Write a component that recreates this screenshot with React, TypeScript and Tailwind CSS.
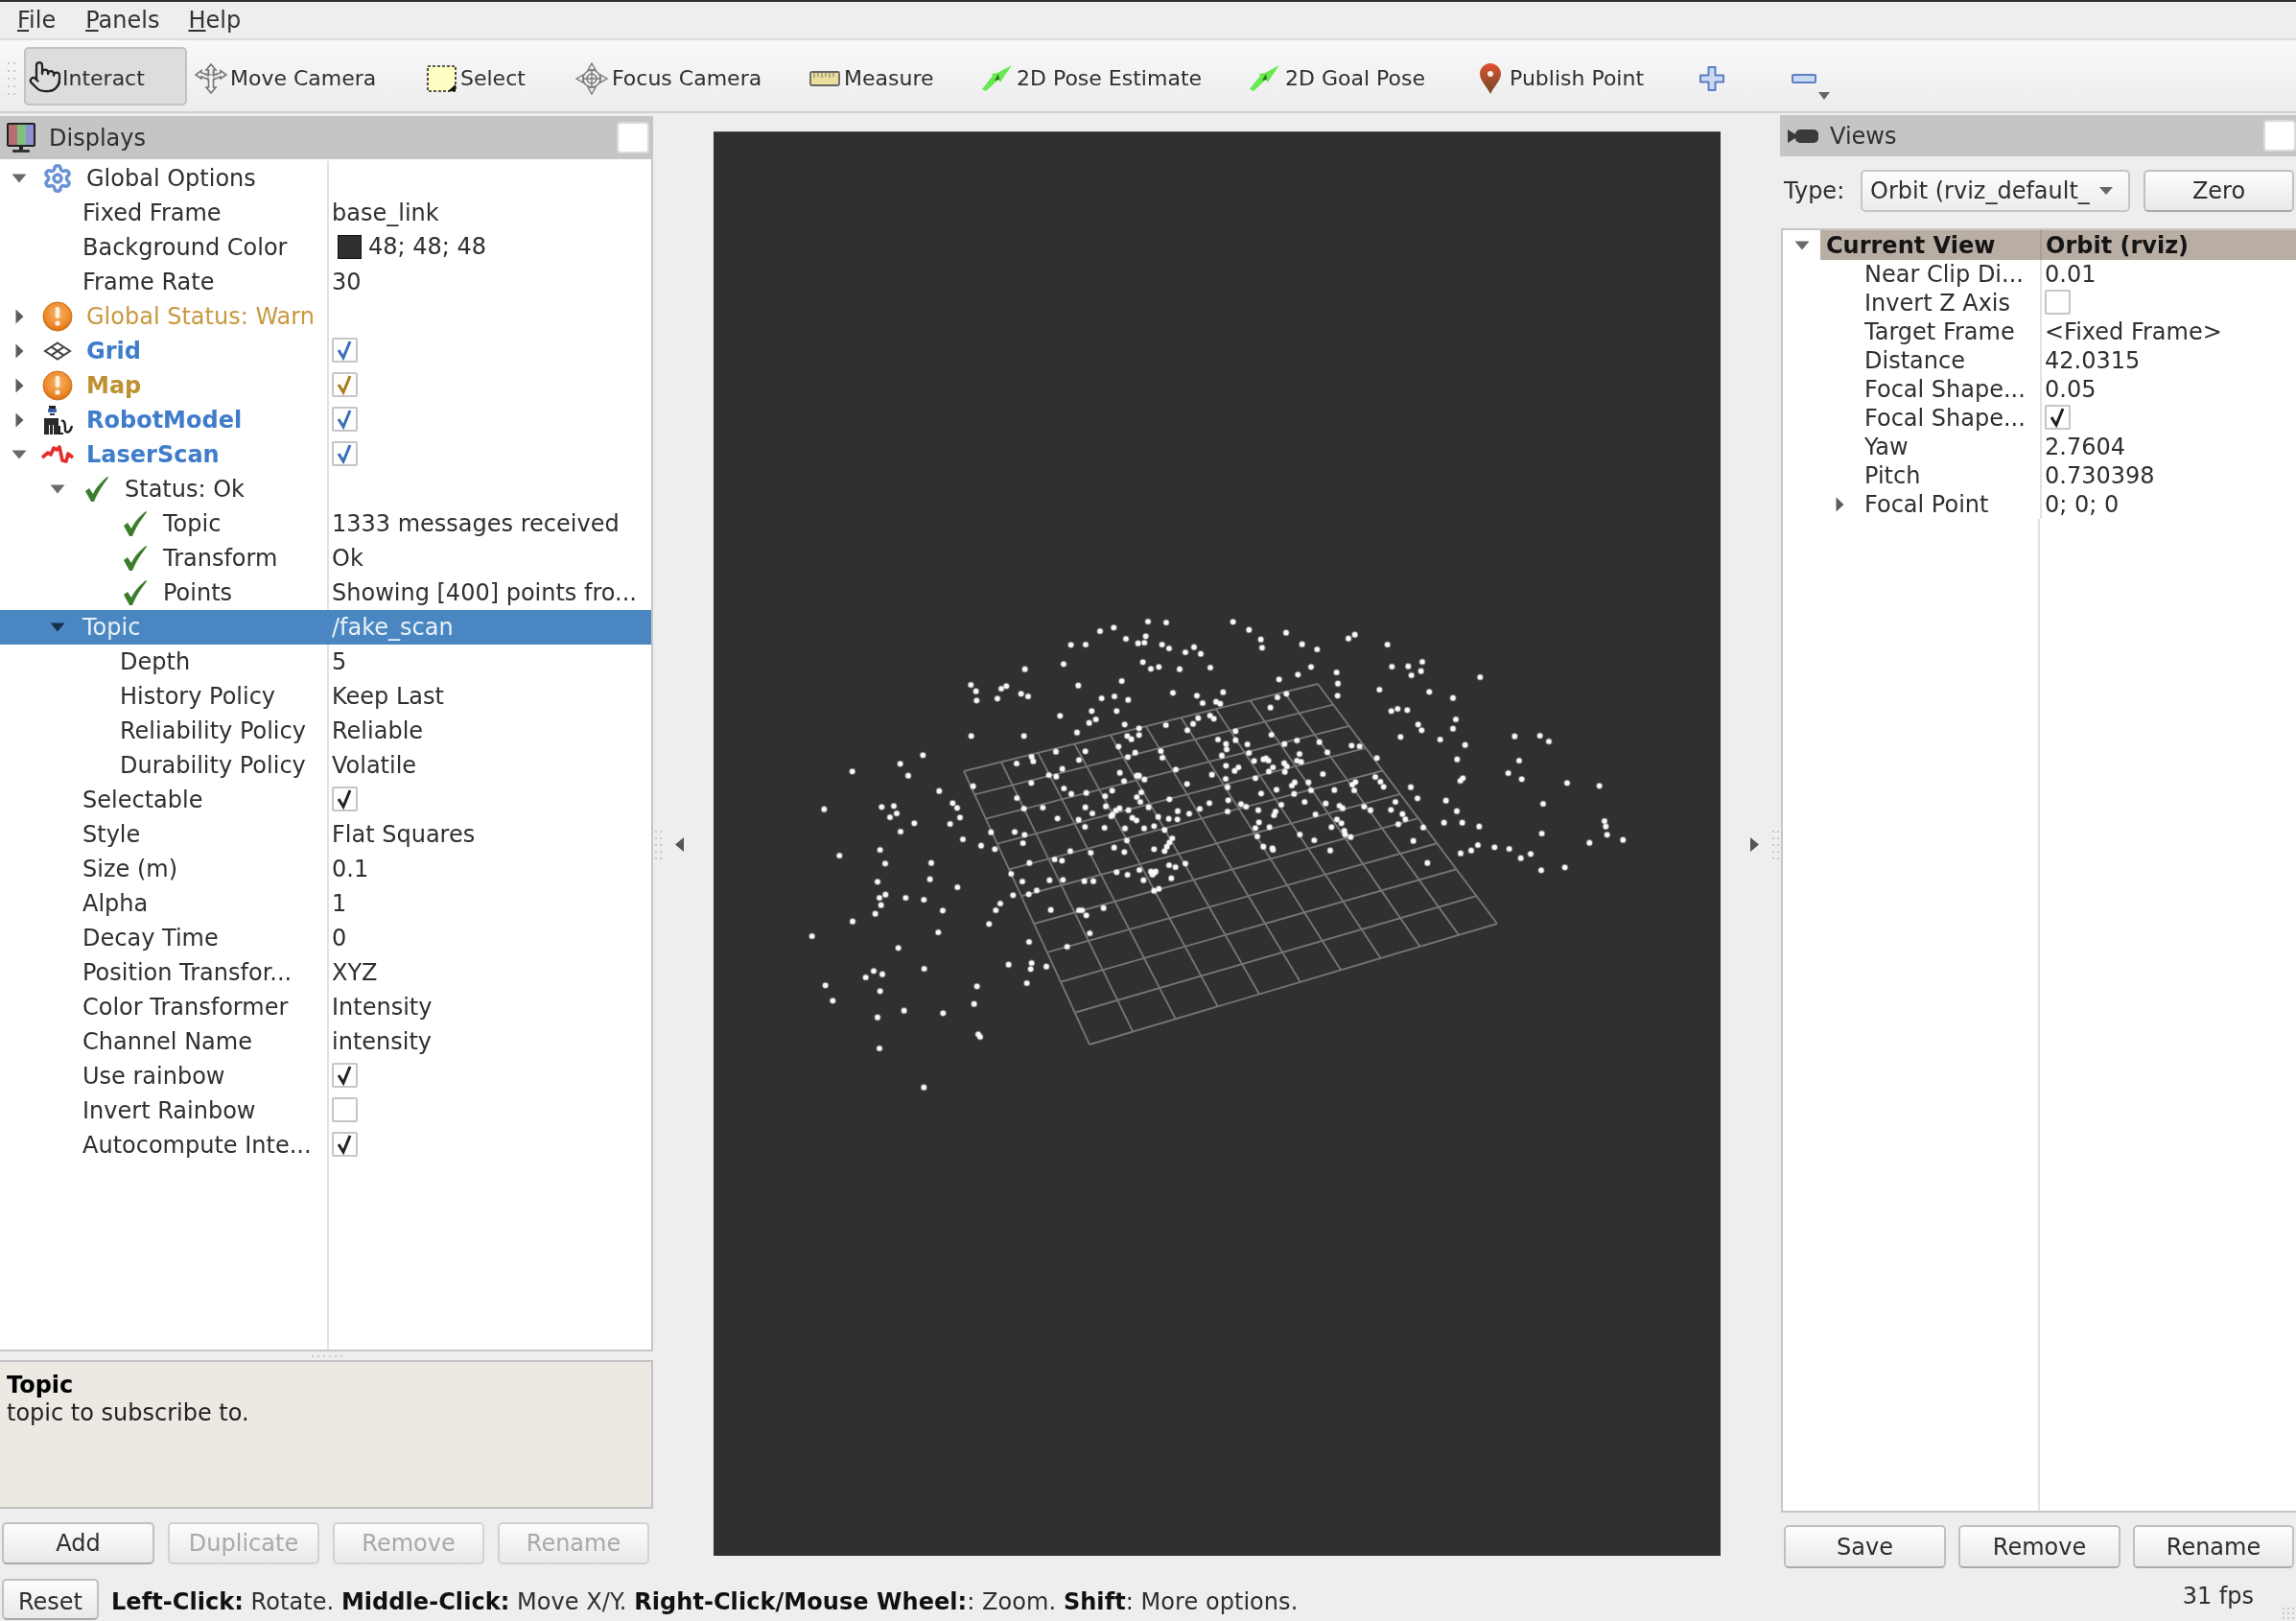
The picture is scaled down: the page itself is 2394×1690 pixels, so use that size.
import React from "react";
import { Pointer, Settings } from "lucide-react";

const ptsA: number[][] = [[1131,84],[1188,87],[1397,85],[1447,110],[981,114],[1024,103],[1062,138],[1124,130],[1120,150],[1100,152],[1175,156],[1197,168],[1275,164],[1248,180],[1296,185],[1484,140],[1488,166],[890,157],[936,156],[867,217],[746,233],[1115,211],[1140,232],[1165,226],[1230,233],[1326,228],[577,282],[593,302],[595,331],[672,294],[688,286],[660,325],[734,310],[756,318],[913,284],[1049,270],[1209,307],[1284,316],[1366,305],[1302,339],[1344,335],[1357,341],[986,324],[1026,318],[1069,329],[955,364],[1033,364],[856,379],[947,401],[968,390],[1058,406],[1325,378],[1337,388],[1288,386],[1272,404],[1187,408],[1103,418],[1254,424],[1405,427],[578,442],[743,442],[909,431],[1066,442],[1079,452],[1103,439],[1350,453],[1375,467],[1377,484],[1405,455],[1442,468],[1447,495],[427,502],[767,507],[772,521],[843,491],[935,490],[1039,475],[1091,494],[1068,508],[1171,489],[1176,510],[1362,503],[1463,520],[1492,515],[356,529],[206,553],[381,566],[720,528],[863,545],[915,517],[821,564],[844,569],[1043,557],[1096,566],[1103,566],[1120,578],[1218,547],[1331,563],[1375,535],[1414,540],[1402,551],[1374,576],[1467,574],[478,614],[584,599],[766,589],[868,606],[891,623],[938,620],[1056,583],[1019,613],[997,630],[1110,618],[1253,592],[1380,602],[1485,622],[118,671],[298,664],[336,661],[345,684],[324,696],[520,652],[534,667],[543,697],[721,636],[743,669],[802,666],[935,665],[957,684],[999,662],[1096,633],[1107,648],[1133,665],[1198,640],[1293,670],[1323,652],[1382,643],[1422,655],[1438,663],[1476,674],[1380,678],[1020,688],[1030,675],[1042,668],[1070,674],[1016,693],[1082,698],[1095,706],[1163,695],[1196,701],[1224,677],[1223,703],[1260,685],[1478,712],[400,715],[512,717],[357,741],[640,743],[714,742],[745,751],[848,700],[914,704],[934,726],[995,729],[1059,731],[1119,731],[1150,724],[1183,736],[1467,730],[1473,756],[552,765],[609,785],[652,796],[740,777],[1065,769],[1207,762],[1198,775],[1190,788],[1183,802],[1492,788],[293,798],[166,816],[888,802],[952,807],[1025,791],[1057,805],[1150,796],[309,841],[453,839],[839,828],[862,832],[760,839],[1197,846],[1217,852],[1248,841],[703,873],[1033,868],[1067,876],[1104,861],[1140,866],[1150,870],[1155,866],[1145,876],[449,890],[285,898],[738,897],[823,893],[865,892],[932,896],[960,896],[1117,893],[1204,887]];
const ptsB: number[][] = [[63,119],[113,155],[160,171],[258,137],[278,125],[380,156],[141,226],[100,250],[41,265],[221,243],[225,278],[224,316],[394,225],[445,224],[489,210],[485,239],[455,252],[670,258],[355,297],[64,310],[36,321],[14,353],[511,304],[585,323],[392,364],[412,357],[442,361],[594,390],[585,419],[476,406],[487,424],[421,445],[545,453],[17,438],[97,456],[58,467],[167,461],[268,472],[293,474],[623,470],[778,443],[857,441],[885,459],[192,493],[105,498],[347,511],[598,515],[792,519],[0,512],[8,519],[57,527],[65,537],[22,540],[9,553],[59,554],[97,519],[110,523],[178,561],[758,558],[342,570],[358,585],[368,601],[280,586],[270,594],[276,612],[133,587],[90,587],[81,597],[800,577],[608,582],[616,574],[942,589],[1043,598],[453,602],[33,610],[141,612],[214,611],[88,623],[474,637],[563,644],[405,648],[121,648],[48,657],[187,653],[230,660],[240,668],[307,663],[327,674],[391,673],[597,677],[867,654],[30,678],[25,690],[155,687],[427,686],[436,702],[222,703],[236,715],[205,727],[11,727],[414,718],[557,713],[614,713],[667,725],[492,728],[1059,708],[1063,725],[1067,751],[245,738],[248,750],[265,758],[106,750],[151,768],[461,770],[863,747],[1117,767],[1012,776],[20,793],[22,798],[201,800],[663,783],[715,790],[761,795],[642,800],[609,809],[828,811],[797,824],[505,839],[861,862],[935,853]];
const ptsC: number[][] = [[535,15],[310,38],[291,48],[373,48],[430,54],[296,71],[278,98],[489,88],[207,122],[80,168],[475,156],[350,205],[709,40],[758,37],[783,25],[669,66],[655,87],[634,130],[827,86],[915,87],[925,87],[938,103],[992,80],[1150,26],[1165,20],[949,159],[759,186],[878,201],[695,257],[767,252],[764,271],[813,263],[752,315],[431,270],[273,277],[248,297],[300,287],[122,322],[293,340],[145,370],[596,325],[587,380],[368,401],[490,409],[285,422],[600,475],[606,483],[291,519],[430,641]];
const points: number[][] = [
  ...ptsA.map(([x, y]) => [820 + x / 3, 620 + y / 3]),
  ...ptsB.map(([x, y]) => [1320 + x / 3, 620 + y / 3]),
  ...ptsC.map(([x, y]) => [820 + x / 3, 920 + y / 3]),
];

function makeProjector() {
  const [x0, y0, x1, y1, x2, y2, x3, y3] = [1005, 804, 1374, 713, 1561, 963, 1136, 1089];
  const dx1 = x1 - x2, dx2 = x3 - x2, sx = x0 - x1 + x2 - x3;
  const dy1 = y1 - y2, dy2 = y3 - y2, sy = y0 - y1 + y2 - y3;
  const den = dx1 * dy2 - dx2 * dy1;
  const g = (sx * dy2 - dx2 * sy) / den, h = (dx1 * sy - sx * dy1) / den;
  const a = x1 - x0 + g * x1, b = x3 - x0 + h * x3, d = y1 - y0 + g * y1, e = y3 - y0 + h * y3;
  return (u: number, v: number) => {
    const w = g * u + h * v + 1;
    return [(a * u + b * v + x0) / w, (d * u + e * v + y0) / w];
  };
}
const project = makeProjector();
const gridLines: number[][][] = [];
for (let i = 0; i <= 10; i++) {
  gridLines.push([project(i / 10, 0), project(i / 10, 1)]);
  gridLines.push([project(0, i / 10), project(1, i / 10)]);
}

function ArrowDown({ dark }: { dark?: boolean }) {
  return (
    <svg width="16" height="10" viewBox="0 0 16 10">
      <path d="M0.5 0.5 H15.5 L8 9.5 Z" fill={dark ? "#16304f" : "#6a6a6a"} />
    </svg>
  );
}
function ArrowRight() {
  return (
    <svg width="9" height="16" viewBox="0 0 9 16">
      <path d="M0.5 0.5 V15.5 L8.5 8 Z" fill="#5c5c5c" />
    </svg>
  );
}
function WarnIcon() {
  return (
    <svg width="32" height="32" viewBox="0 0 32 32">
      <defs>
        <radialGradient id="warnGrad" cx="50%" cy="40%" r="60%">
          <stop offset="0%" stopColor="#f7b56a" />
          <stop offset="70%" stopColor="#ee8a2c" />
          <stop offset="100%" stopColor="#d96f14" />
        </radialGradient>
      </defs>
      <circle cx="16" cy="16" r="15" fill="url(#warnGrad)" stroke="#c9701c" strokeWidth="1" />
      <rect x="13.6" y="6" width="4.8" height="12" rx="2.2" fill="#fdf1e2" />
      <circle cx="16" cy="23" r="2.6" fill="#fdf1e2" />
    </svg>
  );
}
function GridIcon() {
  return (
    <svg width="30" height="20" viewBox="0 0 30 20" fill="none" stroke="#444" strokeWidth="2">
      <path d="M15 1.5 L28 10 L15 18.5 L2 10 Z" />
      <path d="M8.5 5.7 L21.5 14.3 M21.5 5.7 L8.5 14.3" />
    </svg>
  );
}
function RobotIcon() {
  return (
    <svg width="32" height="30" viewBox="0 0 32 30">
      <rect x="7" y="0" width="7" height="3" fill="#222" />
      <rect x="6" y="3" width="9" height="4" rx="1" fill="#3a5fb0" />
      <rect x="8" y="8" width="5" height="2" fill="#333" />
      <path d="M2 13 H17 V30 H12 V20 H11 V30 H8 V20 H7 V30 H2 Z" fill="#2a2a2a" />
      <path d="M20 16 C24 14 24 22 24 25 C24 29 29 29 31 21" fill="none" stroke="#222" strokeWidth="2.4" />
      <path d="M18 21 L18 29 L22 29" fill="none" stroke="#222" strokeWidth="2" />
    </svg>
  );
}
function LaserIcon() {
  return (
    <svg width="34" height="20" viewBox="0 0 34 20" fill="none" stroke="#e52d2d" strokeWidth="3.6" strokeLinejoin="round">
      <path d="M1 13 L7 8 L10 10 L13 3 L16 5 L19 2 L22 16 L26 17 L28 9 L33 13" />
    </svg>
  );
}
function GreenCheck() {
  return (
    <svg width="26" height="26" viewBox="0 0 26 26">
      <path d="M1 15 L5 12 L9 18 C12 11 18 5 24 0 L25 1 C19 9 14 16 10 26 L7 26 Z" fill="#3c7d2c" />
    </svg>
  );
}
function Check({ color }: { color: string }) {
  return (
    <svg width="27" height="26" viewBox="0 0 27 26" fill="none" stroke={color} strokeWidth="3">
      <path d="M7 13 L12 21 L19 4" />
    </svg>
  );
}
function CheckBox({ color }: { color?: string }) {
  return (
    <div className="w-[27px] h-[26px] -mt-[2px] border-2 border-[#c6c6c6] bg-white rounded-[2px] flex items-center justify-center">
      {color ? <div className="-m-[2px]"><Check color={color} /></div> : null}
    </div>
  );
}

type RowDef = {
  pl?: string;
  arrow?: "down" | "right";
  icon?: React.ReactNode;
  iconSlot?: string;
  label: string;
  labelCls?: string;
  value?: React.ReactNode;
  selected?: boolean;
};

const iconSlot0 = "w-[40px] mr-[10px] justify-center";
const iconSlot1 = "w-[42px] mr-[8px] justify-center";
const iconSlot2 = "w-[42px] justify-start";
const blue = "font-bold text-[#3f7cc9]";
const amber = "font-bold text-[#bf9030]";

const leftRows: RowDef[] = [
  { arrow: "down", icon: <Settings size={32} color="#6a93d6" strokeWidth={2.6} />, iconSlot: iconSlot0, label: "Global Options" },
  { pl: "pl-[86px]", label: "Fixed Frame", value: "base_link" },
  { pl: "pl-[86px]", label: "Background Color", value: <span className="flex items-center -mt-[2px]"><span className="w-[25px] h-[25px] bg-[#303030] border border-[#111] ml-[6px] mr-[7px]" />48; 48; 48</span> },
  { pl: "pl-[86px]", label: "Frame Rate", value: "30" },
  { arrow: "right", icon: <WarnIcon />, iconSlot: iconSlot0, label: "Global Status: Warn", labelCls: "text-[#c9983e]" },
  { arrow: "right", icon: <GridIcon />, iconSlot: iconSlot0, label: "Grid", labelCls: blue, value: <CheckBox color="#3a6fb8" /> },
  { arrow: "right", icon: <WarnIcon />, iconSlot: iconSlot0, label: "Map", labelCls: amber, value: <CheckBox color="#a87c1c" /> },
  { arrow: "right", icon: <RobotIcon />, iconSlot: iconSlot0, label: "RobotModel", labelCls: blue, value: <CheckBox color="#3a6fb8" /> },
  { arrow: "down", icon: <LaserIcon />, iconSlot: iconSlot0, label: "LaserScan", labelCls: blue, value: <CheckBox color="#3a6fb8" /> },
  { pl: "pl-[40px]", arrow: "down", icon: <GreenCheck />, iconSlot: iconSlot1, label: "Status: Ok" },
  { pl: "pl-[128px]", icon: <GreenCheck />, iconSlot: iconSlot2, label: "Topic", value: "1333 messages received" },
  { pl: "pl-[128px]", icon: <GreenCheck />, iconSlot: iconSlot2, label: "Transform", value: "Ok" },
  { pl: "pl-[128px]", icon: <GreenCheck />, iconSlot: iconSlot2, label: "Points", value: "Showing [400] points fro..." },
  { pl: "pl-[40px]", arrow: "down", label: "Topic", value: "/fake_scan", selected: true, labelCls: "ml-[6px]" },
  { pl: "pl-[125px]", label: "Depth", value: "5" },
  { pl: "pl-[125px]", label: "History Policy", value: "Keep Last" },
  { pl: "pl-[125px]", label: "Reliability Policy", value: "Reliable" },
  { pl: "pl-[125px]", label: "Durability Policy", value: "Volatile" },
  { pl: "pl-[86px]", label: "Selectable", value: <CheckBox color="#222222" /> },
  { pl: "pl-[86px]", label: "Style", value: "Flat Squares" },
  { pl: "pl-[86px]", label: "Size (m)", value: "0.1" },
  { pl: "pl-[86px]", label: "Alpha", value: "1" },
  { pl: "pl-[86px]", label: "Decay Time", value: "0" },
  { pl: "pl-[86px]", label: "Position Transfor...", value: "XYZ" },
  { pl: "pl-[86px]", label: "Color Transformer", value: "Intensity" },
  { pl: "pl-[86px]", label: "Channel Name", value: "intensity" },
  { pl: "pl-[86px]", label: "Use rainbow", value: <CheckBox color="#222222" /> },
  { pl: "pl-[86px]", label: "Invert Rainbow", value: <CheckBox /> },
  { pl: "pl-[86px]", label: "Autocompute Inte...", value: <CheckBox color="#222222" /> },
];

function LeftRow({ r }: { r: RowDef }) {
  return (
    <div className={`flex h-[36px] shrink-0 items-center whitespace-nowrap ${r.selected ? "bg-[#4a87c2] text-[#eaf1f8]" : ""}`}>
      <div className={`w-[341px] shrink-0 flex items-center h-full overflow-hidden ${r.pl ?? ""}`}>
        {r.arrow ? (
          <span className="w-[40px] flex justify-center shrink-0">
            {r.arrow === "down" ? <ArrowDown dark={r.selected} /> : <ArrowRight />}
          </span>
        ) : null}
        {r.icon ? <span className={`flex shrink-0 ${r.iconSlot ?? ""}`}>{r.icon}</span> : null}
        <span className={r.labelCls ?? ""}>{r.label}</span>
      </div>
      <div className={`flex-1 h-full flex items-center pl-[3px] border-l-2 ${r.selected ? "border-[#4a87c2]" : "border-[#e2e2e2]"}`}>{r.value}</div>
    </div>
  );
}

const viewRows: { label: string; value: React.ReactNode; arrow?: boolean }[] = [
  { label: "Near Clip Di...", value: "0.01" },
  { label: "Invert Z Axis", value: <CheckBox /> },
  { label: "Target Frame", value: "<Fixed Frame>" },
  { label: "Distance", value: "42.0315" },
  { label: "Focal Shape...", value: "0.05" },
  { label: "Focal Shape...", value: <CheckBox color="#222222" /> },
  { label: "Yaw", value: "2.7604" },
  { label: "Pitch", value: "0.730398" },
  { label: "Focal Point", value: "0; 0; 0", arrow: true },
];

function Btn({ children, disabled, cls }: { children: React.ReactNode; disabled?: boolean; cls: string }) {
  return (
    <div className={`flex items-center justify-center rounded-[5px] border-2 bg-gradient-to-b from-[#fdfdfd] to-[#e9e9e9] ${disabled ? "border-[#d2d2d2] text-[#a9a9a9]" : "border-[#c0c0c0] border-b-[#aaaaaa] text-[#2e2e2e]"} ${cls}`}>
      {children}
    </div>
  );
}

function Dots({ cols, rows, cls }: { cols: number; rows: number; cls: string }) {
  const items = Array.from({ length: cols * rows });
  return (
    <div className={`grid ${cls}`}>
      {items.map((_, i) => (
        <span key={i} className="w-[2px] h-[2px] bg-[#c8c8c8]" />
      ))}
    </div>
  );
}

function Tool({ icon, slot, label, cls }: { icon: React.ReactNode; slot: string; label?: string; cls: string }) {
  return (
    <div className={`flex items-center shrink-0 ${cls}`}>
      <span className={`flex items-center shrink-0 ${slot}`}>{icon}</span>
      {label ? <span>{label}</span> : null}
    </div>
  );
}

const MoveIcon = (
  <svg width="34" height="32" viewBox="0 0 34 32" fill="#f4f4f4" stroke="#777" strokeWidth="1.6">
    <path d="M17 1 L22 7 H19.5 V12 L27 10 V7.5 L33 12 L27 16 V14 L19.5 17 V25 H22 L17 31 L12 25 H14.5 V17 L7 14 V16 L1 12 L7 7.5 V10 L14.5 12 V7 H12 Z" />
    <path d="M10 12 L24 12 M14 8 L14 18 M20 8 L20 18" strokeWidth="1" />
  </svg>
);
const SelectIcon = (
  <svg width="31" height="28" viewBox="0 0 31 28">
    <rect x="1" y="1" width="29" height="26" fill="#ffffc4" stroke="#222" strokeWidth="1.6" strokeDasharray="3 2" />
    <path d="M30 20 V27 H22 Z" fill="#111" />
  </svg>
);
const FocusIcon = (
  <svg width="34" height="34" viewBox="0 0 34 34" fill="none" stroke="#7a7a7a" strokeWidth="1.4">
    <path d="M17 1 L21 8 H13 Z M17 33 L21 26 H13 Z M1 17 L8 13 V21 Z M33 17 L26 13 V21 Z" fill="#ececec" />
    <circle cx="17" cy="17" r="9" fill="#eeeeee" />
    <circle cx="17" cy="17" r="5" />
    <path d="M17 8 V26 M8 17 H26" />
  </svg>
);
const MeasureIcon = (
  <svg width="32" height="16" viewBox="0 0 32 16">
    <rect x="1" y="1" width="30" height="14" rx="1.5" fill="#eadf9d" stroke="#666" strokeWidth="1.8" />
    <path d="M5 2 V7 M9 2 V6 M13 2 V7 M17 2 V6 M21 2 V7 M25 2 V6" stroke="#777" strokeWidth="1" />
  </svg>
);
const PoseIcon = (
  <svg width="32" height="27" viewBox="0 0 32 27">
    <path d="M0 25 L11 11 L10 9 L16 8 L31 0 L22 13 L19 18 L17 15 L4 27 Z" fill="#67e84e" />
    <path d="M13 16 L17 9 L18 15 Z" fill="#2f6d22" />
  </svg>
);
const PinIcon = (
  <svg width="22" height="32" viewBox="0 0 22 32">
    <defs>
      <linearGradient id="pinGrad" x1="0" y1="0" x2="0" y2="1">
        <stop offset="0%" stopColor="#e0502f" />
        <stop offset="100%" stopColor="#6e4a2c" />
      </linearGradient>
    </defs>
    <path d="M11 0 C17 0 22 5 22 11 C22 18 14 25 11 32 C8 25 0 18 0 11 C0 5 5 0 11 0 Z" fill="url(#pinGrad)" />
    <circle cx="11" cy="11" r="3" fill="#f6eee6" />
  </svg>
);
const PlusIcon = (
  <svg width="26" height="26" viewBox="0 0 26 26">
    <path d="M9.5 1 H16.5 V9.5 H25 V16.5 H16.5 V25 H9.5 V16.5 H1 V9.5 H9.5 Z" fill="#c9d9f2" stroke="#5b7fc0" strokeWidth="2" strokeLinejoin="round" />
  </svg>
);
const MinusIcon = (
  <svg width="26" height="10" viewBox="0 0 26 10">
    <rect x="1" y="1" width="24" height="8" rx="1" fill="#c9d9f2" stroke="#5b7fc0" strokeWidth="2" />
  </svg>
);

function TitleBar({ icon, title, cls, textCls }: { icon: React.ReactNode; title: string; cls: string; textCls: string }) {
  return (
    <div className={`flex items-center shrink-0 bg-[#c5c5c5] ${cls}`}>
      {icon}
      <span className={textCls}>{title}</span>
      <span className="ml-auto w-[34px] h-[33px] bg-white border-2 border-[#dadada] rounded-[4px]" />
    </div>
  );
}

export default function App() {
  return (
    <div className="w-[2394px] h-[1690px] overflow-hidden flex flex-col bg-[#eeeeee] text-[#2f2f2f] text-[24px] font-['DejaVu_Sans',sans-serif] leading-none blur-[0.6px]">
      <div className="h-[2px] bg-[#303030] shrink-0" />
      <div className="h-[40px] shrink-0 flex items-center bg-[#eeeeee] border-b-2 border-[#dcdcdc] text-[#333]">
        <span className="ml-[18px]"><u>F</u>ile</span>
        <span className="ml-[31px]"><u>P</u>anels</span>
        <span className="ml-[30px]"><u>H</u>elp</span>
      </div>
      <div className="h-[76px] shrink-0 flex items-center pt-[5px] bg-gradient-to-b from-[#f9f9f9] to-[#ececec] border-b-2 border-[#d0d0d0] whitespace-nowrap text-[22px]">
        <Dots cols={2} rows={5} cls="ml-[8px] mr-[9px] grid-cols-2 gap-x-[4px] gap-y-[6px] shrink-0" />
        <div className="w-[170px] h-[61px] shrink-0 mr-[8px] flex items-center pl-[2px] rounded-[5px] bg-[#dddddd] border-2 border-[#c2c2c2] -mt-[4px]">
          <Pointer size={36} color="#222" strokeWidth={1.5} />
          <span className="pt-[4px]">Interact</span>
        </div>
        <Tool cls="w-[242px]" slot="w-[37px]" icon={MoveIcon} label="Move Camera" />
        <Tool cls="w-[155px]" slot="w-[35px]" icon={SelectIcon} label="Select" />
        <Tool cls="w-[244px]" slot="w-[38px]" icon={FocusIcon} label="Focus Camera" />
        <Tool cls="w-[180px]" slot="w-[36px]" icon={MeasureIcon} label="Measure" />
        <Tool cls="w-[279px]" slot="w-[36px]" icon={PoseIcon} label="2D Pose Estimate" />
        <Tool cls="w-[240px]" slot="w-[37px]" icon={PoseIcon} label="2D Goal Pose" />
        <Tool cls="w-[229px]" slot="w-[31px]" icon={PinIcon} label="Publish Point" />
        <Tool cls="w-[96px]" slot="w-[26px]" icon={PlusIcon} />
        <Tool cls="w-[50px]" slot="w-[26px]" icon={MinusIcon} />
        <svg width="12" height="8" viewBox="0 0 12 8" className="self-end mb-[12px] -ml-[22px]">
          <path d="M0 0 H12 L6 8 Z" fill="#666" />
        </svg>
      </div>

      <div className="h-[1522px] shrink-0 flex pt-[3px]">
        {/* Displays column */}
        <div className="w-[681px] shrink-0 flex flex-col">
          <TitleBar
            cls="h-[45px] pl-[6px] pr-[4px]"
            textCls="ml-[13px]"
            title="Displays"
            icon={
              <svg width="32" height="32" viewBox="0 0 32 32">
                <rect x="1" y="0" width="30" height="25" rx="2" fill="#222" />
                <rect x="3" y="2" width="9" height="21" fill="#b56f6f" />
                <rect x="12" y="2" width="9" height="21" fill="#80c180" />
                <rect x="21" y="2" width="8" height="21" fill="#8f8fd4" />
                <rect x="14" y="25" width="4" height="3" fill="#222" />
                <rect x="7" y="28" width="18" height="3" rx="1" fill="#333" />
              </svg>
            }
          />
          <div className="h-[1243px] pt-[2px] bg-white border-r-2 border-b-2 border-[#c6c6c6] flex flex-col shrink-0">
            {leftRows.map((r, i) => (
              <LeftRow key={i} r={r} />
            ))}
            <div className="flex-1 flex">
              <div className="w-[343px] border-r-2 border-[#e2e2e2]" />
            </div>
          </div>
          <div className="h-[9px] shrink-0 flex items-center justify-center">
            <Dots cols={6} rows={1} cls="grid-cols-6 gap-x-[4px]" />
          </div>
          <div className="h-[155px] shrink-0 bg-[#ece9e3] border-2 border-l-0 border-[#c2c2c2] pl-[7px] pt-[10px] text-[#222]">
            <div className="font-bold h-[29px] leading-[29px] text-black">Topic</div>
            <div className="h-[29px] leading-[29px]">topic to subscribe to.</div>
          </div>
          <div className="flex mt-[14px] pl-[2px] gap-[14px]">
            <Btn cls="w-[159px] h-[44px]">Add</Btn>
            <Btn cls="w-[158px] h-[44px]" disabled>Duplicate</Btn>
            <Btn cls="w-[158px] h-[44px]" disabled>Remove</Btn>
            <Btn cls="w-[158px] h-[44px]" disabled>Rename</Btn>
          </div>
        </div>

        {/* viewport column */}
        <div className="flex-1 flex">
          <div className="w-[63px] flex items-center justify-center gap-[14px]">
            <Dots cols={2} rows={5} cls="grid-cols-2 gap-x-[3px] gap-y-[5px]" />
            <svg width="9" height="15" viewBox="0 0 9 15"><path d="M9 0 V15 L0 7.5 Z" fill="#555" /></svg>
            <span className="w-[16px]" />
          </div>
          <div className="w-[1050px] h-[1485px] mt-[16px] bg-[#303030] border-t border-[#555]">
            <svg width="1050" height="1484" viewBox="744 138 1050 1484" className="block">
              <g stroke="#747474" strokeWidth="1.9" fill="none">
                {gridLines.map((l, i) => (
                  <line key={i} x1={l[0][0]} y1={l[0][1]} x2={l[1][0]} y2={l[1][1]} />
                ))}
              </g>
              <g>
                {points.map((p, i) => (
                  <g key={i}>
                    <circle cx={p[0]} cy={p[1]} r="3.6" fill="#ffffff" opacity="0.35" />
                    <circle cx={p[0]} cy={p[1]} r="2.6" fill="#f8f8f8" />
                  </g>
                ))}
              </g>
            </svg>
          </div>
          <div className="flex-1 flex items-center justify-center gap-[14px]">
            <span className="w-[16px]" />
            <svg width="9" height="15" viewBox="0 0 9 15"><path d="M0 0 V15 L9 7.5 Z" fill="#555" /></svg>
            <Dots cols={2} rows={5} cls="grid-cols-2 gap-x-[3px] gap-y-[5px]" />
          </div>
        </div>

        {/* Views column */}
        <div className="w-[538px] shrink-0 flex flex-col -mt-[1px]">
          <TitleBar
            cls="h-[43px] pl-[8px]"
            textCls="ml-[12px]"
            title="Views"
            icon={
              <svg width="32" height="16" viewBox="0 0 32 16">
                <path d="M0 1 L8 6 V10 L0 15 Z" fill="#3a3a3a" />
                <rect x="8" y="1" width="24" height="14" rx="5" fill="#3a3a3a" />
              </svg>
            }
          />
          <div className="flex items-center mt-[14px] h-[44px] shrink-0">
            <span className="ml-[4px] w-[80px]">Type:</span>
            <div className="w-[281px] h-[44px] flex items-center pl-[8px] rounded-[5px] border-2 border-[#c6c6c6] bg-gradient-to-b from-[#fdfdfd] to-[#ececec] whitespace-nowrap overflow-hidden">
              <span>Orbit (rviz_default_</span>
              <svg width="14" height="8" viewBox="0 0 14 8" className="ml-[10px] shrink-0"><path d="M0 0 H14 L7 8 Z" fill="#666" /></svg>
            </div>
            <Btn cls="w-[157px] h-[44px] ml-[14px]">Zero</Btn>
          </div>
          <div className="h-[1339px] shrink-0 mt-[17px] ml-[1px] bg-white border-l-2 border-t-2 border-b-2 border-[#c6c6c6] flex flex-col whitespace-nowrap">
            <div className="h-[31px] flex items-center font-bold text-[#151515] shrink-0">
              <span className="w-[39px] flex justify-center shrink-0"><ArrowDown /></span>
              <div className="flex-1 h-full flex items-center bg-[#b9aea4]">
                <span className="w-[229px] pl-[6px]">Current View</span>
                <span className="pl-[4px] border-l-2 border-[#a99e94] h-full flex items-center">Orbit (rviz)</span>
              </div>
            </div>
            {viewRows.map((r, i) => (
              <div key={i} className="h-[30px] flex items-center shrink-0">
                <div className="w-[268px] shrink-0 h-full flex items-center pl-[85px]">
                  {r.arrow ? <span className="-ml-[30px] w-[30px]"><ArrowRight /></span> : null}
                  <span>{r.label}</span>
                </div>
                <div className="flex-1 h-full flex items-center pl-[3px] border-l-2 border-[#e2e2e2]">{r.value}</div>
              </div>
            ))}
            <div className="flex-1 flex">
              <div className="w-[268px] border-r-2 border-[#e2e2e2]" />
            </div>
          </div>
          <div className="flex mt-[13px] ml-[4px] gap-[13px]">
            <Btn cls="w-[169px] h-[45px]">Save</Btn>
            <Btn cls="w-[169px] h-[45px]">Remove</Btn>
            <Btn cls="w-[168px] h-[45px]">Rename</Btn>
          </div>
        </div>
      </div>

      <div className="flex-1 flex items-end whitespace-nowrap relative">
        <Btn cls="ml-[2px] w-[101px] h-[43px] mb-[1px] pt-[4px]">Reset</Btn>
        <span className="ml-[13px] mb-[8px] tracking-[0.055px]">
          <b className="text-[#111]">Left-Click:</b> Rotate. <b className="text-[#111]">Middle-Click:</b> Move X/Y. <b className="text-[#111]">Right-Click/Mouse Wheel:</b>: Zoom. <b className="text-[#111]">Shift</b>: More options.
        </span>
        <span className="ml-auto mr-[44px] mb-[14px]">31 fps</span>
        <Dots cols={3} rows={3} cls="absolute right-[2px] bottom-[2px] grid-cols-3 gap-[3px]" />
      </div>
    </div>
  );
}
